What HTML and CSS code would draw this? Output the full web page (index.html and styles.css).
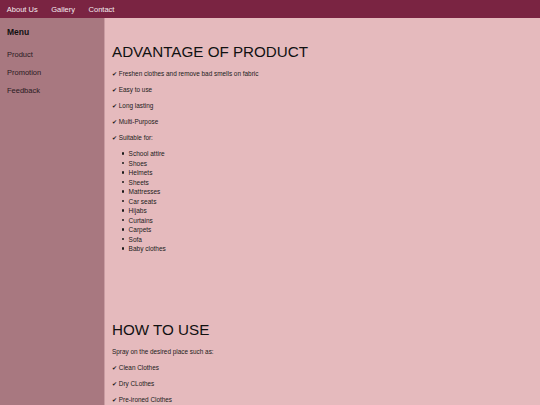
FILE: index.html
```html
<!DOCTYPE html>
<html lang="en">
<head>
<meta charset="utf-8">
<title>Product</title>
<link rel="stylesheet" href="styles.css">
</head>
<body>
<nav class="topnav">
  <a href="#">About Us</a>
  <a href="#">Gallery</a>
  <a href="#">Contact</a>
</nav>
<div class="layout">
  <aside class="sidebar">
    <h3 class="menu-title">Menu</h3>
    <a href="#">Product</a>
    <a href="#">Promotion</a>
    <a href="#">Feedback</a>
  </aside>
  <main class="content">
    <section class="section first">
      <h1>ADVANTAGE OF PRODUCT</h1>
      <p>&#10004; Freshen clothes and remove bad smells on fabric</p>
      <p>&#10004; Easy to use</p>
      <p>&#10004; Long lasting</p>
      <p>&#10004; Multi-Purpose</p>
      <p>&#10004; Suitable for:</p>
      <ul>
        <li>School attire</li>
        <li>Shoes</li>
        <li>Helmets</li>
        <li>Sheets</li>
        <li>Mattresses</li>
        <li>Car seats</li>
        <li>Hijabs</li>
        <li>Curtains</li>
        <li>Carpets</li>
        <li>Sofa</li>
        <li>Baby clothes</li>
      </ul>
    </section>
    <section class="section">
      <h1>HOW TO USE</h1>
      <p>Spray on the desired place such as:</p>
      <p>&#10004; Clean Clothes</p>
      <p>&#10004; Dry CLothes</p>
      <p>&#10004; Pre-ironed Clothes</p>
      <p>&#10004; Ironed Clothes</p>
    </section>
  </main>
</div>
</body>
</html>
```
FILE: styles.css
```css
html, body {
  margin: 0;
  padding: 0;
}
body {
  font-family: "Liberation Sans", Arial, sans-serif;
  background: #e5babd;
  color: #1a1a1a;
  height: 405px;
  overflow: hidden;
}
.topnav {
  display: flex;
  height: 18px;
  align-items: center;
  background: #7a2442;
}
.topnav a {
  color: #f4eaee;
  text-decoration: none;
  font-size: 7.5px;
  padding: 0 6.8px;
}
.layout {
  display: flex;
  min-height: 387px;
}
.sidebar {
  width: 90px;
  flex: 0 0 90px;
  background: #a87880;
  border-right: 1px solid #c99ca2;
  padding: 0 7px;
  display: flex;
  flex-direction: column;
}
.menu-title {
  font-size: 8.5px;
  font-weight: bold;
  margin: 9px 0 0;
  line-height: 11px;
  color: #111;
}
.sidebar a {
  color: #2a1a22;
  text-decoration: none;
  font-size: 7.5px;
  line-height: 9px;
  margin-top: 9px;
}
.sidebar .menu-title + a {
  margin-top: 12px;
}
.content {
  flex: 1;
  padding: 0 7px;
}
.section {
  padding: 25px 0 0;
}
.section.first {
  padding-bottom: 35px;
}
.content h1 {
  font-size: 15.2px;
  font-weight: normal;
  line-height: 18px;
  margin: 0 0 8px;
  color: #111;
}
.content p {
  font-size: 6.4px;
  line-height: 9px;
  margin: 7px 0;
}
.content h1 + p {
  margin-top: 8px;
}
.content ul {
  list-style: none;
  margin: 6px 0 7px;
  padding-left: 10px;
  font-size: 6.5px;
  line-height: 9.5px;
}
.content li::before {
  content: "";
  display: inline-block;
  width: 2.2px;
  height: 2.2px;
  border-radius: 50%;
  background: #1a1a1a;
  margin-right: 4.4px;
  vertical-align: 1.5px;
}
```
